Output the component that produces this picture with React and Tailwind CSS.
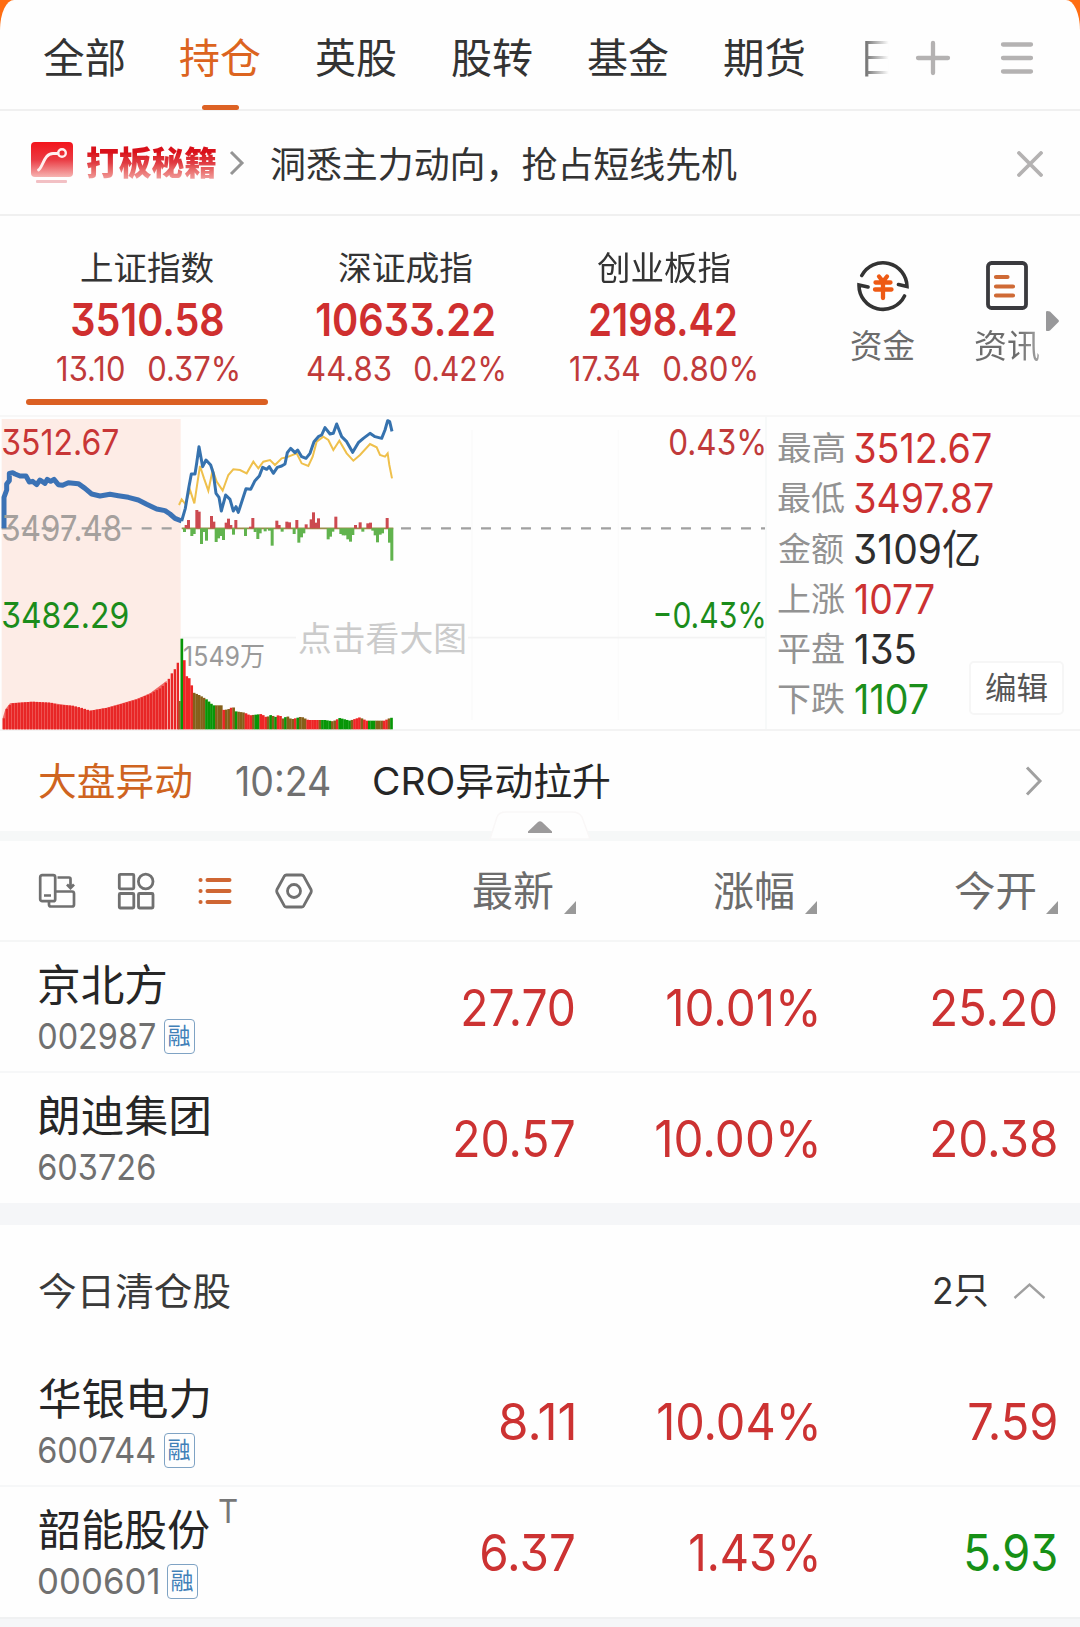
import { useLayoutEffect, useRef, useState } from "react";

/* Single line of text whose drawn glyphs span exactly `w` pixels. */
function Fit({ w, className = "", children }) {
  const ref = useRef(null);
  const [fit, setFit] = useState({ s: 1, x: 0 });
  useLayoutEffect(() => {
    const cs = getComputedStyle(ref.current);
    const ctx = document.createElement("canvas").getContext("2d");
    ctx.font = `${cs.fontWeight} ${cs.fontSize} ${cs.fontFamily}`;
    const m = ctx.measureText(children);
    const ink = m.actualBoundingBoxRight + m.actualBoundingBoxLeft;
    const s = w / ink;
    setFit({ s, x: m.actualBoundingBoxLeft * s });
  }, [w, children]);
  return (
    <span className="block shrink-0" style={{ width: w }}>
      <span
        ref={ref}
        className={`block w-max origin-left whitespace-nowrap ${className}`}
        style={{ transform: `translateX(${fit.x}px) scaleX(${fit.s})` }}
      >
        {children}
      </span>
    </span>
  );
}

const TABS = ["全部", "持仓", "英股", "股转", "基金", "期货"];

function Header() {
  return (
    <header className="flex h-[111px] items-center border-b-2 border-[#f0f0f0] pt-[6px] pl-[44px]">
      <nav className="flex gap-[56px]">
        {TABS.map((t) => (
          <div key={t} className="relative">
            <Fit w={80} className={t === "持仓" ? "text-[41px] leading-[50px] text-[#dc6420]" : "text-[41px] leading-[50px] text-[#333]"}>
              {t}
            </Fit>
            {t === "持仓" && <i className="absolute top-[72px] left-[22px] h-[5px] w-[37px] rounded-full bg-[#dd6224]" />}
          </div>
        ))}
      </nav>
      <div className="-mr-[13px] ml-[54px] w-[41px] shrink-0 bg-linear-to-r from-[#777] from-20% to-transparent to-75% bg-clip-text text-[41px] leading-[50px] text-transparent">
        日
      </div>
      <svg className="ml-[29px]" width="36" height="36" viewBox="0 0 36 36" stroke="#b4b2b2" strokeWidth="4.300" strokeLinecap="round">
        <path d="M18 3v30M3 18h30" />
      </svg>
      <svg className="ml-[49px]" width="34" height="34" viewBox="0 0 34 34" stroke="#b4b2b2" strokeWidth="4.300" strokeLinecap="round">
        <path d="M3 3.500h28M3 17h28M3 30.500h28" />
      </svg>
    </header>
  );
}

function Banner() {
  return (
    <section className="flex h-[105px] items-center border-b-2 border-[#f0f0f0] pl-[31px]">
      <svg width="42" height="42" viewBox="0 0 42 42" className="mt-[1px]">
        <defs>
          <linearGradient id="red" x1="0" y1="0" x2="0" y2="1">
            <stop offset="0" stopColor="#f3141b" />
            <stop offset=".5" stopColor="#ea3a42" />
            <stop offset="1" stopColor="#f6b4b2" />
          </linearGradient>
        </defs>
        <rect width="42" height="35" rx="4" fill="url(#red)" />
        <rect x="5" y="38" width="31" height="3" rx="1" fill="#f2c0c4" />
        <path d="M7.500 28C12 25 13 11.500 22 11.500H27" fill="none" stroke="#fff0f0" strokeWidth="2.800" strokeLinecap="round" />
        <circle cx="31" cy="11" r="3.800" fill="none" stroke="#fff0f0" strokeWidth="2.400" />
      </svg>
      <div className="ml-[13px]">
        <Fit w={130} className="bg-linear-to-b from-[#d9101a] from-25% via-[#e03a42] to-[#f0a0a0] to-90% bg-clip-text text-[33px] leading-[42px] font-black text-transparent">
          打板秘籍
        </Fit>
      </div>
      <svg className="ml-[13px]" width="16" height="26" viewBox="0 0 16 26" fill="none" stroke="#959595" strokeWidth="3">
        <path d="M2 2l11 11L2 24" />
      </svg>
      <div className="mt-[4px] ml-[26px]">
        <Fit w={466} className="text-[36px] leading-[44px] text-[#333]">洞悉主力动向，抢占短线先机</Fit>
      </div>
      <svg className="mt-[2px] mr-[37px] ml-auto" width="26" height="26" viewBox="0 0 26 26" stroke="#b4b2b2" strokeWidth="3.800" strokeLinecap="round">
        <path d="M2 2l22 22M24 2L2 24" />
      </svg>
    </section>
  );
}

const INDICES = [
  { name: "上证指数", nw: 133, v: "3510.58", vw: 151, d: "13.10", dw: 67, gap: 25, p: "0.37%", pw: 89 },
  { name: "深证成指", nw: 133, v: "10633.22", vw: 177, d: "44.83", dw: 83, gap: 25, p: "0.42%", pw: 89 },
  { name: "创业板指", nw: 133, v: "2198.42", vw: 146, d: "17.34", dw: 69, gap: 25, p: "0.80%", pw: 92 },
];

function Indices() {
  return (
    <section className="flex h-[201px] border-b-2 border-[#f7f7f7] pl-[26px]">
      <div className="flex gap-[16px]">
        {INDICES.map((q, i) => (
          <div key={q.name} className="relative flex w-[242px] flex-col items-center pt-[32px]">
            <Fit w={q.nw} className="text-[33px] leading-[40px] text-[#333]">{q.name}</Fit>
            <div className="mt-[10px]">
              <Fit w={q.vw} className="text-[45px] leading-[44px] font-semibold text-[#cf2f2f]">{q.v}</Fit>
            </div>
            <div className="mt-[8px] flex" style={{ gap: q.gap }}>
              <Fit w={q.dw} className="text-[34px] leading-[38px] text-[#c03a3a]">{q.d}</Fit>
              <Fit w={q.pw} className="text-[34px] leading-[38px] text-[#c03a3a]">{q.p}</Fit>
            </div>
            {i === 0 && <i className="absolute top-[183px] left-0 h-[6px] w-[242px] rounded-full bg-[#db6023]" />}
          </div>
        ))}
      </div>
      <div className="ml-[67px] flex w-[64px] flex-col items-center pt-[44px]">
        <svg width="52" height="52" viewBox="0 0 52 52" fill="none" strokeLinecap="round" strokeLinejoin="miter">
          <path d="M4.800 15.500A24 24 0 0 1 50 26.500L41.500 24.500M47.500 36A24 24 0 0 1 2 25L11 27" stroke="#333" strokeWidth="3.600" />
          <path d="M22 16.500L26 21.500L30 16.500M26 22V38M18.500 22.500H33.500M18 29.500H34.500" stroke="#ee5a14" strokeWidth="4.300" />
        </svg>
        <div className="mt-[14px]">
          <Fit w={64} className="text-[33px] leading-[40px] text-[#6c6c6c]">资金</Fit>
        </div>
      </div>
      <div className="ml-[60px] flex w-[64px] flex-col items-center pt-[45px]">
        <svg width="42" height="49" viewBox="0 0 42 49" fill="none">
          <rect x="2" y="2" width="38" height="45" rx="3.500" stroke="#3a3a3e" strokeWidth="3.800" />
          <path d="M10 16H21.500M10 25.500H27M10 34.500H27" stroke="#cf6a35" strokeWidth="4.200" strokeLinecap="round" />
        </svg>
        <div className="mt-[16px]">
          <Fit w={64} className="bg-linear-to-r from-[#6c6c6c] from-65% to-[#a5a5a5] bg-clip-text text-[33px] leading-[40px] text-transparent">资讯</Fit>
        </div>
      </div>
      <svg className="mt-[94px] ml-[7px]" width="14" height="22" viewBox="0 0 14 22" fill="#98989a">
        <path d="M0 1.500Q1 .5 4 1.500L12.500 10Q13.500 11 12.500 12L4 20.500Q1 21.500 0 20.500Z" />
      </svg>
    </section>
  );
}

const PRE_LINE =
  "12,355 12,262 20,240 20,222 28,212 28,190 38,188 45,192 60,198 78,198 88,216 98,214 110,224 120,210 135,220 142,208 152,214 162,208 175,224 188,226 205,218 235,221 255,235 275,252 300,258 330,253 355,257 385,262 415,270 440,283 470,297 495,302 510,312 525,325 545,333";
const BLUE_LINE =
  "545,333 556,295 566,235 574,192 585,192 590,160 597,110 608,170 618,150 632,165 640,190 648,250 657,262 664,303 677,255 690,268 700,303 708,290 715,307 727,270 738,236 752,238 765,212 778,198 788,172 800,178 808,170 820,190 832,172 845,168 855,162 862,128 872,115 885,128 893,120 905,140 918,145 930,130 942,95 955,80 965,75 975,53 990,72 1000,70 1010,42 1025,80 1040,95 1058,127 1075,98 1090,85 1110,70 1125,80 1145,85 1155,60 1163,32 1169,35 1176,64";
const YELLOW_LINE =
  "537,285 545,268 556,282 570,240 583,280 592,220 600,168 612,205 625,242 638,180 650,215 668,242 685,195 700,178 720,180 740,190 760,155 775,175 790,155 810,150 825,165 845,145 860,142 890,130 905,160 925,168 938,140 950,95 970,80 985,90 1000,120 1018,92 1040,130 1060,152 1080,135 1110,102 1130,112 1140,135 1155,140 1163,130 1168,165 1176,205";

const UP = [[558, 345], [565, 330], [590, 300], [597, 305], [634, 318], [641, 335], [678, 338], [685, 326], [692, 345], [707, 330], [751, 350], [758, 324], [830, 332], [837, 345], [860, 335], [868, 337], [890, 330], [918, 343], [933, 328], [940, 307], [948, 338], [955, 325], [1007, 320], [1066, 345], [1080, 337], [1103, 340], [1111, 338], [1161, 324]];
const DOWN = [[553, 366], [575, 378], [582, 372], [604, 402], [611, 366], [619, 392], [648, 396], [655, 385], [663, 378], [670, 390], [700, 374], [736, 378], [765, 366], [773, 387], [780, 370], [795, 364], [808, 362], [816, 407], [846, 365], [882, 372], [896, 398], [904, 382], [911, 370], [984, 388], [991, 380], [998, 365], [1022, 372], [1029, 376], [1036, 376], [1043, 388], [1051, 395], [1058, 375], [1088, 365], [1118, 362], [1125, 376], [1132, 397], [1140, 374], [1147, 370], [1168, 398], [1175, 452]];

const PRE_ENV = [[8, 925], [16, 898], [30, 880], [95, 875], [150, 878], [170, 884], [215, 887], [240, 893], [268, 902], [320, 893], [360, 882], [410, 867], [450, 850], [480, 833], [500, 812], [512, 790], [525, 772], [533, 750]];
const POST_ENV = [[546, 686], [553, 748], [561, 800], [568, 804], [575, 824], [582, 848], [600, 856], [620, 868], [640, 886], [665, 886], [672, 900], [685, 898], [700, 890], [708, 904], [735, 908], [750, 916], [785, 912], [800, 922], [815, 914], [825, 922], [838, 914], [850, 926], [862, 918], [875, 928], [905, 920], [925, 930], [975, 930], [1000, 934], [1020, 924], [1050, 932], [1080, 922], [1100, 932], [1155, 932], [1165, 926], [1180, 922]];
const POST_COLORS = "grrrrbbbbbggggbbbrbbrbgbbbrrrbggrrrbgbgrrbgbbbrgbbbrrrrrbggggbbrgggggbrrrbrrgggbbbrrbg";
const FILL = { g: "#079607", r: "#ee2626", b: "#85601a" };

function envelope(env, x) {
  for (let i = 1; i < env.length; i++) {
    if (x <= env[i][0]) {
      const [x0, y0] = env[i - 1];
      const [x1, y1] = env[i];
      return y0 + ((y1 - y0) * (x - x0)) / (x1 - x0);
    }
  }
  return env[env.length - 1][1];
}

function ChartDrawing() {
  const pre = Array.from({ length: 59 }, (_, i) => 8 + i * 9);
  const post = Array.from({ length: 86 }, (_, i) => 546 + i * 7.4);
  return (
    <svg className="block" width="765" height="313" viewBox="0 21 2295 939">
      <rect x="5" y="27" width="537" height="931" fill="#fdece6" />
      <path d="M1416 60V930M1855 60V930" stroke="#fbfbfb" strokeWidth="5" />
      <path d="M545 683H2295" stroke="#f3f3f3" strokeWidth="5" />
      <path d="M5 355H515M1203 355H2295" stroke="#a0a0a0" strokeWidth="7" strokeDasharray="30 30" />
      <polyline points={YELLOW_LINE} fill="none" stroke="#efc04c" strokeWidth="6" />
      <polyline points={PRE_LINE} fill="none" stroke="#3b72b5" strokeWidth="15" strokeLinejoin="round" />
      <polyline points={BLUE_LINE} fill="none" stroke="#3672ae" strokeWidth="9" strokeLinejoin="round" />
      <path d="M545 355H1180" stroke="#9b8d4a" strokeWidth="5" />
      {UP.map(([x, y]) => (
        <rect key={x} x={x - 4} y={y} width="9" height={355 - y} fill="#cc4a50" />
      ))}
      {DOWN.map(([x, y]) => (
        <rect key={x} x={x - 4} y="355" width="9" height={y - 355} fill="#61b34e" />
      ))}
      <path d="M8 958V925L16 898L30 880L95 875L150 878L215 887L268 902L320 893L410 867L450 850L500 812V958Z" fill="#f06a66" />
      {pre.map((x) => (
        <rect key={x} x={x} y={envelope(PRE_ENV, x)} width="7" height={958 - envelope(PRE_ENV, x)} fill="#e82626" />
      ))}
      <rect x="535" y="873" width="7" height="85" fill="#a35a2a" />
      {post.map((x, i) => (
        <rect key={x} x={x - 4.5} y={envelope(POST_ENV, x)} width="8" height={958 - envelope(POST_ENV, x)} fill={FILL[POST_COLORS[i]]} />
      ))}
    </svg>
  );
}

const STATS = [
  ["最高", "3512.67", 136, "text-[41px] leading-[50px] text-[#cc3131]"],
  ["最低", "3497.87", 138, "text-[41px] leading-[50px] text-[#cc3131]"],
  ["金额", "3109亿", 124, "text-[41px] leading-[50px] text-[#2d2d2d]"],
  ["上涨", "1077", 79, "text-[41px] leading-[50px] text-[#cc3131]"],
  ["平盘", "135", 60, "text-[41px] leading-[50px] text-[#2d2d2d]"],
  ["下跌", "1107", 73, "text-[41px] leading-[50px] text-[#1b8f1b]"],
];

function Chart() {
  return (
    <section className="flex h-[314px] border-b-2 border-[#f3f3f3]">
      <div className="relative w-[767px] border-r-2 border-[#f7f9f9]">
        <ChartDrawing />
        <div className="absolute top-[5px] left-[3px]"><Fit w={115} className="text-[36px] leading-[40px] text-[#c83636]">3512.67</Fit></div>
        <div className="absolute top-[91px] left-[3px]"><Fit w={118} className="text-[36px] leading-[40px] text-[#a5a09d]">3497.48</Fit></div>
        <div className="absolute top-[178px] left-[3px]"><Fit w={125} className="text-[36px] leading-[40px] text-[#1b8c1b]">3482.29</Fit></div>
        <div className="absolute top-[5px] right-px"><Fit w={94} className="text-[36px] leading-[40px] text-[#c03a3a]">0.43%</Fit></div>
        <div className="absolute top-[178px] right-px"><Fit w={109} className="text-[36px] leading-[40px] text-[#1b8c1b]">−0.43%</Fit></div>
        <div className="absolute top-[220px] left-[184px]"><Fit w={80} className="text-[27px] leading-[40px] text-[#9a9a9a]">1549万</Fit></div>
        <div className="absolute top-[202px] left-[296px] bg-[#fefefe] px-[3px]"><Fit w={166} className="text-[34px] leading-[40px] text-[#cbcbcb]">点击看大图</Fit></div>
      </div>
      <div className="relative flex-1 pt-[6px] pl-[11px]">
        {STATS.map(([k, v, w, cls]) => (
          <div key={k} className="flex h-[50.3px] gap-[11px]">
            <Fit w={66} className="text-[33px] leading-[50px] text-[#929292]">{k}</Fit>
            <Fit w={w} className={cls}>{v}</Fit>
          </div>
        ))}
        <div className="absolute right-[16px] bottom-[14px] flex h-[54px] w-[95px] items-center justify-center rounded-[5px] border-2 border-[#f6f6f6] bg-white">
          <Fit w={61} className="text-[31px] leading-[38px] text-[#555]">编辑</Fit>
        </div>
      </div>
    </section>
  );
}

function NewsLine() {
  return (
    <section className="relative flex h-[110px] items-center border-b-[10px] border-[#f6f8f8] pl-[39px]">
      <Fit w={152} className="text-[38px] leading-[50px] text-[#cf6420]">大盘异动</Fit>
      <div className="ml-[45px]"><Fit w={94} className="text-[41px] leading-[50px] text-[#707070]">10:24</Fit></div>
      <div className="ml-[44px]"><Fit w={236} className="text-[38px] leading-[50px] text-[#262626]">CRO异动拉升</Fit></div>
      <svg className="mr-[37px] ml-auto" width="18" height="30" viewBox="0 0 18 30" fill="none" stroke="#a0a0a0" strokeWidth="3">
        <path d="M2 1.500L15 15L2 28.500" />
      </svg>
      <svg className="absolute top-[79px] left-[488px]" width="104" height="30" viewBox="0 0 104 30">
        <path d="M2 29L9 7Q11 2 18 2H84Q91 2 94 7L102 29Z" fill="#fefefe" stroke="#f9f7f7" strokeWidth="1.500" />
        <path d="M40 23V21.500L50 12Q52 10.500 54 12L64 21.500V23Z" fill="#9c9a9b" />
      </svg>
    </section>
  );
}

function SortHead({ children }) {
  return (
    <div className="flex h-full items-center justify-end">
      <Fit w={80} className="text-[41px] leading-[50px] text-[#6c6c6c]">{children}</Fit>
      <svg className="mt-[34px] ml-[11px]" width="12" height="13" viewBox="0 0 12 13" fill="#999">
        <path d="M12 0V13H0Z" />
      </svg>
    </div>
  );
}

function Toolbar() {
  return (
    <section className="grid h-[101px] grid-cols-[400px_176px_241px_241px] items-center border-b-2 border-[#f5f6f6]">
      <div className="flex h-full items-center pl-[38px]">
        <svg width="38" height="38" viewBox="0 0 38 38" fill="none" stroke="#707070" strokeWidth="2.700">
          <rect x="2.200" y="3.200" width="15" height="26" rx="2" />
          <path d="M6 23.500H13M19.500 5.500H31Q32.500 5.500 32.500 7V16M29 12.500L32.500 16L36 12.500M17 19.500H34Q36 19.500 36 21.500V32.500Q36 34.500 34 34.500H13Q11 34.500 11 32.500V29.500" />
        </svg>
        <svg className="ml-[41px]" width="38" height="38" viewBox="0 0 38 38" fill="none" stroke="#707070" strokeWidth="2.800">
          <rect x="2.300" y="2.300" width="14.500" height="14.500" rx="1" />
          <circle cx="28.700" cy="9.500" r="7.300" />
          <rect x="2.300" y="21.500" width="14.500" height="14.500" rx="1" />
          <rect x="21.500" y="21.500" width="14.500" height="14.500" rx="1" />
        </svg>
        <svg className="ml-[42px]" width="36" height="30" viewBox="0 0 36 30" fill="none" stroke="#cf6633" strokeWidth="4" strokeLinecap="round">
          <path d="M3.500 4H3.600M10.500 4H32.500M3.500 15H3.600M10.500 15H32.500M3.500 26H3.600M10.500 26H32.500" />
        </svg>
        <svg className="ml-[42px]" width="38" height="36" viewBox="0 0 38 36" fill="none" stroke="#707070" strokeWidth="2.800" strokeLinejoin="round">
          <path d="M11.500 2H26.500Q28 2 28.800 3.300L36 16.500Q36.600 18 36 19.500L28.800 32.700Q28 34 26.500 34H11.500Q10 34 9.200 32.700L2 19.500Q1.400 18 2 16.500L9.200 3.300Q10 2 11.500 2Z" />
          <circle cx="19" cy="18" r="6.500" />
        </svg>
      </div>
      <SortHead>最新</SortHead>
      <SortHead>涨幅</SortHead>
      <SortHead>今开</SortHead>
    </section>
  );
}

const RED = "text-[51px] leading-[50px] text-[#cc3232]";
const GREEN = "text-[51px] leading-[50px] text-[#169016]";

function StockRow({ name, nw, code, cw, tag, t, cells, bordered }) {
  return (
    <div className={bordered ? "h-[131px] border-b-2 border-[#f6f7f8]" : "h-[130px]"}>
      <div className="grid grid-cols-[300px_274px_243px_239px]">
        <div className="pt-[18px] pl-[39px]">
          <div className="flex gap-[10px]">
            <Fit w={nw} className="text-[43px] leading-[50px] text-[#262626]">{name}</Fit>
            {t && (
              <div className="-mt-[11px]"><Fit w={18} className="text-[33px] leading-[34px] text-[#777]">T</Fit></div>
            )}
          </div>
          <div className="mt-[8px] flex items-center gap-[9px]">
            <Fit w={cw} className="text-[36px] leading-[36px] text-[#707070]">{code}</Fit>
            {tag && (
              <div className="flex h-[35px] w-[31px] items-center justify-center rounded-[4px] border border-[#7fa3c4]">
                <Fit w={22} className="text-[23px] leading-[33px] text-[#4180b8]">融</Fit>
              </div>
            )}
          </div>
        </div>
        {cells.map(([v, w, down]) => (
          <div key={v} className="flex justify-end pt-[41px]">
            <Fit w={w} className={down ? GREEN : RED}>{v}</Fit>
          </div>
        ))}
      </div>
    </div>
  );
}

export default function App() {
  return (
    <div className="h-[1627px] w-[1080px] overflow-hidden bg-[#ff6d12] font-['Inter','Noto_Sans_CJK_SC',sans-serif] [font-feature-settings:'cv09']">
      <main className="h-full overflow-hidden rounded-t-[14px_30px] bg-[#fefefe]">
        <Header />
        <Banner />
        <Indices />
        <Chart />
        <NewsLine />
        <Toolbar />
        <StockRow bordered name="京北方" nw={127} code="002987" cw={116} tag cells={[["27.70", 111], ["10.01%", 150], ["25.20", 124]]} />
        <StockRow name="朗迪集团" nw={170} code="603726" cw={116} cells={[["20.57", 119], ["10.00%", 161], ["20.38", 124]]} />
        <div className="h-[22px] bg-[#f5f6f8]" />
        <div className="flex h-[131px] items-center justify-between pr-[34px] pl-[39px]">
          <Fit w={191} className="text-[38px] leading-[50px] text-[#3a3a3a]">今日清仓股</Fit>
          <div className="flex items-center gap-[26px]">
            <Fit w={53} className="text-[37px] leading-[50px] text-[#333]">2只</Fit>
            <svg width="33" height="18" viewBox="0 0 33 18" fill="none" stroke="#a0a0a0" strokeWidth="2.400">
              <path d="M1.500 16L16.500 2.500L31.500 16" />
            </svg>
          </div>
        </div>
        <StockRow bordered name="华银电力" nw={169} code="600744" cw={116} tag cells={[["8.11", 73], ["10.04%", 159], ["7.59", 87]]} />
        <StockRow name="韶能股份" nw={170} code="000601" cw={119} tag t cells={[["6.37", 92], ["1.43%", 127], ["5.93", 90, true]]} />
        <div className="h-[20px] border-t-2 border-[#f0f1f2] bg-[#f5f6f8]" />
      </main>
    </div>
  );
}
